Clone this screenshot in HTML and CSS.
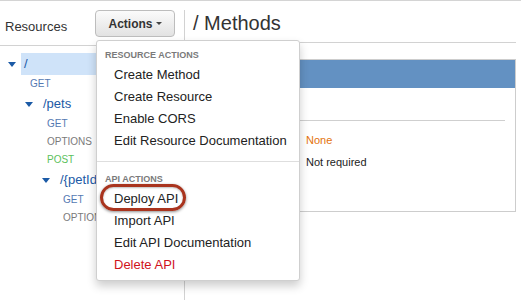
FILE: index.html
```html
<!DOCTYPE html>
<html>
<head>
<meta charset="utf-8">
<link rel="stylesheet" href="styles.css">
</head>
<body>
<div class="app">
  <aside class="sidebar">
    <div class="sidebar-head">
      <span class="res-title">Resources</span>
      <div class="actions">
        <button class="btn">Actions<span class="btn-caret"></span></button>
        <div class="menu">
          <div class="menu-header">RESOURCE ACTIONS</div>
          <div class="menu-item">Create Method</div>
          <div class="menu-item">Create Resource</div>
          <div class="menu-item">Enable CORS</div>
          <div class="menu-item">Edit Resource Documentation</div>
          <div class="menu-divider"></div>
          <div class="menu-header api">API ACTIONS</div>
          <div class="menu-item highlight">Deploy API<span class="oval"></span></div>
          <div class="menu-item">Import API</div>
          <div class="menu-item">Edit API Documentation</div>
          <div class="menu-item danger">Delete API</div>
        </div>
      </div>
    </div>
    <ul class="tree">
      <li class="res lvl0 selected"><span class="caret"></span><span class="res-label">/</span></li>
      <li class="meth lvl0 get">GET</li>
      <li class="res lvl1"><span class="caret"></span><span class="res-label">/pets</span></li>
      <li class="meth lvl1 get">GET</li>
      <li class="meth lvl1 options">OPTIONS</li>
      <li class="meth lvl1 post">POST</li>
      <li class="res lvl2"><span class="caret"></span><span class="res-label">/{petId}</span></li>
      <li class="meth lvl2 get">GET</li>
      <li class="meth lvl2 options">OPTIONS</li>
    </ul>
  </aside>
  <main class="main">
    <div class="main-head"><h1 class="page-title">/ Methods</h1></div>
    <section class="panel">
      <div class="panel-bar"></div>
      <div class="panel-body">
        <div class="panel-top"></div>
        <div class="kv">
          <span class="k"></span><span class="v none">None</span>
          <span class="k"></span><span class="v">Not required</span>
        </div>
      </div>
    </section>
  </main>
</div>
</body>
</html>
```

FILE: styles.css
```css
* { box-sizing: border-box; }
html, body { margin: 0; padding: 0; }
body {
  font-family: "Liberation Sans", Arial, Helvetica, sans-serif;
  color: #333;
  background: #fff;
  border-top: 1px solid #d4d4d4;
  width: 521px;
  height: 300px;
  overflow: hidden;
}
.app {
  display: grid;
  grid-template-columns: 185px 1fr;
  height: 299px;
}
.sidebar {
  margin-top: 9px;
  border-right: 1px solid #d2d2d2;
}
.sidebar-head {
  height: 36px;
  border-bottom: 1px solid #d2d2d2;
  display: flex;
  align-items: flex-start;
  justify-content: space-between;
  padding: 0 9px 0 5px;
}
.res-title {
  font-size: 13px;
  line-height: 16px;
  margin-top: 9px;
  color: #333;
}
.actions { position: relative; }
.btn {
  height: 27px;
  width: 80px;
  font-family: inherit;
  font-size: 12px;
  font-weight: bold;
  color: #333;
  border: 1px solid #bdbdbd;
  border-radius: 4px;
  background: linear-gradient(#fbfbfb, #e2e2e2);
  padding: 0;
  display: flex;
  align-items: center;
  justify-content: center;
  gap: 3px;
}
.btn-caret {
  width: 0; height: 0;
  border-left: 3px solid transparent;
  border-right: 3px solid transparent;
  border-top: 3px solid #444;
}
.menu {
  position: absolute;
  top: 30px;
  left: 1px;
  width: 204px;
  z-index: 10;
  background: #fff;
  border: 1px solid #cfcfcf;
  border-radius: 3px;
  box-shadow: 0 5px 10px rgba(0,0,0,0.2);
  padding: 5px 0 4px;
}
.menu-header {
  font-size: 9px;
  font-weight: bold;
  color: #7a7a7a;
  line-height: 18px;
  padding-left: 8px;
}
.menu-item {
  position: relative;
  font-size: 13px;
  line-height: 22px;
  color: #222;
  padding-left: 17px;
  white-space: nowrap;
}
.menu-item.danger { color: #d0121b; }
.menu-divider {
  height: 1px;
  background: #dedede;
  margin: 9px 0 8px;
}
.oval {
  position: absolute;
  left: 3px;
  top: -4px;
  width: 86px;
  height: 27px;
  border: 3px solid #a9341e;
  border-radius: 14px;
  box-shadow: 0 1px 3px rgba(0,0,0,0.45), inset 0 1px 2px rgba(0,0,0,0.25);
}
.tree {
  list-style: none;
  margin: 0;
  padding: 7px 0 0;
}
.tree li { white-space: nowrap; }
.res {
  display: flex;
  align-items: center;
  height: 22px;
  font-size: 13px;
  color: #1b5aa6;
}
.res.lvl0 { padding-left: 8px; }
.res.lvl1 { padding-left: 25px; }
.res.lvl2 { padding-left: 42px; }
.caret {
  width: 0; height: 0;
  border-left: 4px solid transparent;
  border-right: 4px solid transparent;
  border-top: 5px solid #1b5aa6;
  margin-right: 6px;
}
.res.lvl0 .caret { margin-right: 5px; }
.res-label {
  flex: 1;
  height: 22px;
  line-height: 22px;
  padding-left: 4px;
}
.res.lvl0 .res-label { padding-left: 3px; }
.selected .res-label { background: #cfe3f9; }
.meth {
  height: 18px;
  line-height: 18px;
  font-size: 10px;
}
.meth.lvl0 { padding-left: 30px; }
.meth.lvl1 { padding-left: 47px; }
.meth.lvl2 { padding-left: 63px; }
.get { color: #5479b2; }
.options { color: #7a7a7a; }
.post { color: #5cc15c; }
.main {
  padding-right: 5px;
}
.main-head {
  height: 42px;
  border-bottom: 1px solid #d2d2d2;
  padding-left: 8px;
}
.page-title {
  margin: 0;
  font-size: 20px;
  font-weight: normal;
  line-height: 24px;
  padding-top: 10px;
  color: #333;
}
.panel {
  margin: 16px 0 0 14px;
  border: 1px solid #cdcdcd;
  height: 153px;
}
.panel-bar {
  height: 28px;
  background: #6391c2;
}
.panel-body {
  padding: 0 10px 0 10px;
}
.panel-top {
  height: 33px;
  border-bottom: 1px solid #cfcfcf;
}
.kv {
  display: grid;
  grid-template-columns: 96px 1fr;
  padding-top: 8px;
  font-size: 11px;
  line-height: 22px;
}
.v { color: #222; }
.v.none { color: #e3730c; }
```
